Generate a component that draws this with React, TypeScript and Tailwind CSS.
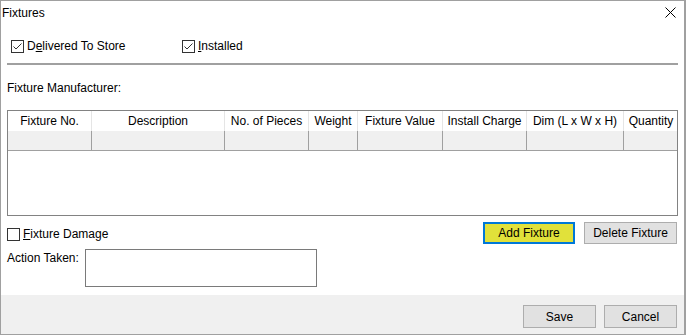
import React from 'react';

const columns = [
  { label: 'Fixture No.', width: 84 },
  { label: 'Description', width: 133 },
  { label: 'No. of Pieces', width: 84 },
  { label: 'Weight', width: 49 },
  { label: 'Fixture Value', width: 85 },
  { label: 'Install Charge', width: 84 },
  { label: 'Dim (L x W x H)', width: 97 },
  { label: 'Quantity', width: 54 },
];

function CheckBox({ checked }: { checked?: boolean }) {
  return (
    <span className="flex h-[13px] w-[13px] shrink-0 items-center justify-center border border-[#333333] bg-white">
      {checked && (
        <svg width="11" height="11" viewBox="0 0 11 11" aria-hidden="true">
          <path d="M1.5 5.5 L4 8 L9.5 2.5" fill="none" stroke="#333333" strokeWidth="1" />
        </svg>
      )}
    </span>
  );
}

function WinButton({ children, primary }: { children: React.ReactNode; primary?: boolean }) {
  return (
    <button
      type="button"
      className={
        primary
          ? 'flex h-[22px] w-[92px] items-center justify-center border-2 border-[#0078d7] bg-[#e1e13a] text-black'
          : 'flex h-[22px] w-[93px] items-center justify-center border border-[#adadad] bg-[#e1e1e1] text-black'
      }
    >
      {children}
    </button>
  );
}

export default function App() {
  return (
    <div
      className="flex h-[335px] w-[686px] flex-col border border-r-2 border-[#a0a0a0] bg-white text-[12px] leading-[16px] text-black"
      style={{ fontFamily: '"Liberation Sans", Arial, sans-serif' }}
    >
      {/* title bar */}
      <div className="flex h-[23px] items-center justify-between pl-[1px] pr-[8px]">
        <span>Fixtures</span>
        <svg width="11" height="11" viewBox="0 0 11 11" aria-label="Close">
          <path d="M0.5 0.5 L10.5 10.5 M10.5 0.5 L0.5 10.5" stroke="#000" strokeWidth="1" />
        </svg>
      </div>

      {/* status checkboxes */}
      <div className="mt-[14px] flex h-[16px] items-center pl-[10px]">
        <label className="flex w-[171px] items-center gap-[3px]">
          <CheckBox checked />
          <span>
            D<span className="underline">e</span>livered To Store
          </span>
        </label>
        <label className="flex items-center gap-[3px]">
          <CheckBox checked />
          <span>
            <span className="underline">I</span>nstalled
          </span>
        </label>
      </div>

      <div className="ml-[6px] mt-[9px] h-[2px] w-[671px] bg-[#a0a0a0]" />

      <div className="ml-[6px] mt-[15px]">Fixture Manufacturer:</div>

      {/* fixtures grid */}
      <div className="ml-[6px] mt-[14px] h-[106px] w-[671px] border border-[#828282] bg-white">
        <div className="grid grid-cols-[84px_133px_84px_49px_85px_84px_97px_54px]">
          {columns.map((c, i) => (
            <div
              key={c.label}
              className={`flex h-[20px] items-center justify-center whitespace-nowrap ${
                i < columns.length - 1 ? 'border-r border-[#e5e5e5]' : ''
              }`}
            >
              {c.label}
            </div>
          ))}
        </div>
        <div className="grid grid-cols-[84px_133px_84px_49px_85px_84px_97px_54px] border-b border-[#a0a0a0] bg-[#f0f0f0]">
          {columns.map((c, i) => (
            <div
              key={c.label}
              className={`h-[19px] ${i < columns.length - 1 ? 'border-r border-[#a0a0a0]' : ''}`}
            />
          ))}
        </div>
      </div>

      {/* damage + actions */}
      <div className="mt-[6px] flex h-[22px] items-center pl-[6px] pr-[7px]">
        <label className="flex items-center gap-[3px] pt-[2px]">
          <CheckBox />
          <span>
            <span className="underline">F</span>ixture Damage
          </span>
        </label>
        <div className="ml-auto flex gap-[9px]">
          <WinButton primary>Add Fixture</WinButton>
          <WinButton>Delete Fixture</WinButton>
        </div>
      </div>

      <div className="mt-[5px] flex pl-[6px]">
        <span className="mt-[1px] w-[78px]">Action Taken:</span>
        <textarea className="h-[38px] w-[232px] resize-none border border-[#7a7a7a] outline-none" />
      </div>

      {/* footer */}
      <div className="mt-[8px] flex flex-1 justify-end gap-[8px] bg-[#f0f0f0] pr-[7px] pt-[10px]">
        <button type="button" className="flex h-[23px] w-[73px] items-center justify-center border border-[#adadad] bg-[#e1e1e1]">
          Save
        </button>
        <button type="button" className="flex h-[23px] w-[73px] items-center justify-center border border-[#adadad] bg-[#e1e1e1]">
          Cancel
        </button>
      </div>
    </div>
  );
}
